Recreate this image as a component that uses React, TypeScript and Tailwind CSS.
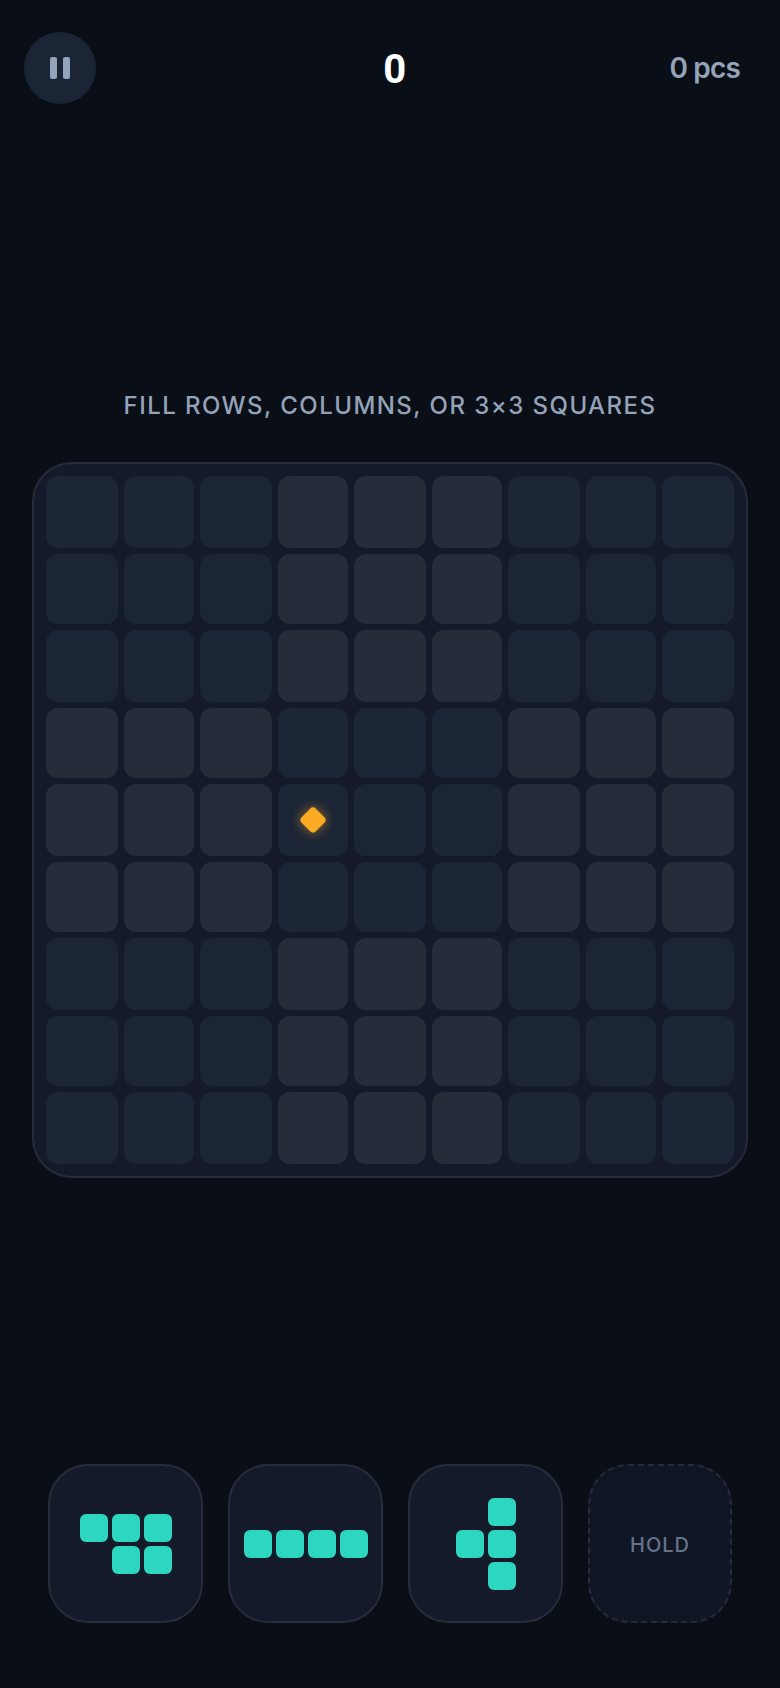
function Piece({ rows }: { rows: string[] }) {
  return (
    <div className="flex h-[159px] w-[155px] flex-col items-center justify-center gap-1 rounded-[40px] border-2 border-[#272c3a] bg-[#141a29]">
      {rows.map((row, r) => (
        <div key={r} className="flex gap-1">
          {row.split('').map((ch, c) =>
            ch === 'X' ? (
              <div key={c} className="h-7 w-7 rounded-md bg-[#2dd6c1]" />
            ) : (
              <div key={c} className="h-7 w-7" />
            ),
          )}
        </div>
      ))}
    </div>
  );
}

export default function App() {
  const cells = Array.from({ length: 81 }, (_, i) => i);

  return (
    <div className="flex h-[1688px] w-[780px] flex-col overflow-hidden bg-[#0a0e17] font-['Inter',sans-serif]">
      {/* Top bar */}
      <div className="flex items-center pl-6 pr-10 pt-8">
        <button className="flex h-[72px] w-[72px] items-center justify-center gap-[6px] rounded-full bg-[#1c2536]">
          <span className="h-[22px] w-[7px] rounded-[2px] bg-[#94a3b8]" />
          <span className="h-[22px] w-[7px] rounded-[2px] bg-[#94a3b8]" />
        </button>
        <div className="flex-1 pl-[24px] pt-[3px] text-center font-['Roboto',sans-serif] text-[40px] font-bold leading-[48px] text-white">0</div>
        <div className="text-[28px] font-semibold leading-9 tracking-[-0.03em] text-[#94a3b8]">0 pcs</div>
      </div>

      {/* Board */}
      <div className="flex flex-1 flex-col items-center justify-center gap-10">
        <p className="text-2xl font-medium leading-8 tracking-[0.06em] text-[#94a3b8]">FILL ROWS, COLUMNS, OR 3×3 SQUARES</p>
        <div className="grid w-[716px] grid-cols-[72px_70px_72px_70px_72px_70px_72px_70px_72px] grid-rows-[72px_70px_72px_70px_72px_70px_72px_70px_72px] gap-1.5 rounded-[40px] border-2 border-[#272c3a] bg-[#141a29] p-3">
          {cells.map((i) => {
            const r = Math.floor(i / 9);
            const c = i % 9;
            const alt = (Math.floor(r / 3) + Math.floor(c / 3)) % 2 === 1;
            return (
              <div
                key={i}
                className={`flex items-center justify-center rounded-xl ${alt ? 'bg-[#262c3a]' : 'bg-[#1c2536]'}`}
              >
                {r === 4 && c === 3 && (
                  <div className="h-5 w-5 rotate-45 rounded-[4px] bg-[#fbab24] shadow-[0_0_12px_rgba(251,171,36,0.6)]" />
                )}
              </div>
            );
          })}
        </div>
      </div>

      {/* Piece tray */}
      <div className="flex justify-center gap-[25px] pb-[65px]">
        <Piece rows={['XXX', '.XX']} />
        <Piece rows={['XXXX']} />
        <Piece rows={['.X', 'XX', '.X']} />
        <div className="flex h-[159px] w-[144px] items-center justify-center rounded-[40px] border-2 border-dashed border-[#272c3a] bg-[#111624] pt-0.5">
          <span className="text-xl font-medium tracking-[0.05em] text-[#64748b]">HOLD</span>
        </div>
      </div>
    </div>
  );
}
